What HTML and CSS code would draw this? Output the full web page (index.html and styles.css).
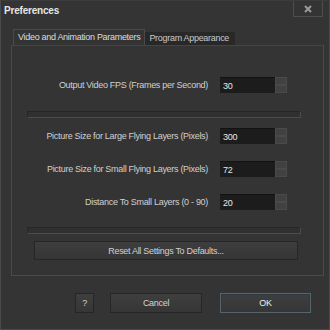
FILE: index.html
```html
<!DOCTYPE html>
<html>
<head>
<meta charset="utf-8">
<link rel="stylesheet" href="styles.css">
</head>
<body>
<div class="window">
  <div class="titlebar">
    <span class="title">Preferences</span>
    <span class="close">
      <svg width="10" height="10" viewBox="0 0 10 10"><path d="M2 2 L8 8 M8 2 L2 8" stroke="#9a9a9a" stroke-width="2"/></svg>
    </span>
  </div>
  <div class="tabs">
    <div class="tab active">Video and Animation Parameters</div>
    <div class="tab">Program Appearance</div>
  </div>
  <div class="panel">
    <div class="row first">
      <span class="label">Output Video FPS (Frames per Second)</span>
      <span class="spin"><span class="input">30</span><span class="arrows"><i></i><i></i></span></span>
    </div>
    <div class="sep"></div>
    <div class="row">
      <span class="label">Picture Size for Large Flying Layers (Pixels)</span>
      <span class="spin"><span class="input">300</span><span class="arrows"><i></i><i></i></span></span>
    </div>
    <div class="row">
      <span class="label">Picture Size for Small Flying Layers (Pixels)</span>
      <span class="spin"><span class="input">72</span><span class="arrows"><i></i><i></i></span></span>
    </div>
    <div class="row">
      <span class="label">Distance To Small Layers (0 - 90)</span>
      <span class="spin"><span class="input">20</span><span class="arrows"><i></i><i></i></span></span>
    </div>
    <div class="sep sep2"></div>
    <div class="reset">Reset All Settings To Defaults...</div>
  </div>
  <div class="footer">
    <div class="btn help">?</div>
    <div class="btn cancel">Cancel</div>
    <div class="btn ok">OK</div>
  </div>
</div>
</body>
</html>
```
FILE: styles.css
```css
html, body {
  margin: 0;
  padding: 0;
  background: #333333;
}
.window {
  width: 330px;
  height: 330px;
  box-sizing: border-box;
  background: #343434;
  border: 1px solid #4a4a4a;
  border-top-color: #3c3c3c;
  font-family: "Liberation Sans", Arial, sans-serif;
  font-size: 9px;
  letter-spacing: -0.3px;
  color: #d0d0d0;
  white-space: nowrap;
  display: flex;
  flex-direction: column;
}
.titlebar {
  height: 20px;
  display: flex;
  align-items: flex-start;
  justify-content: space-between;
}
.title {
  font-weight: bold;
  font-size: 10px;
  letter-spacing: -0.2px;
  color: #e6e6e6;
  margin: 4px 0 0 3px;
}
.close {
  width: 28px;
  height: 15px;
  border: 1px solid #4e4e4e;
  border-top: none;
  margin-right: 6px;
  display: flex;
  align-items: center;
  justify-content: center;
}
.tabs {
  display: flex;
  align-items: flex-end;
  margin: 8px 0 0 12px;
  height: 16px;
}
.tab {
  height: 13px;
  padding: 0 6px 0 4px;
  background: #282828;
  color: #c8c8c8;
  line-height: 13px;
}
.tab.active {
  height: 16px;
  line-height: 15px;
  padding: 0 4px 0 4px;
  background: #343434;
  border: 1px solid #4a4a4a;
  border-bottom: none;
  box-sizing: border-box;
  color: #dcdcdc;
}
.panel {
  margin: 0 5px 0 10px;
  height: 231px;
  box-sizing: border-box;
  border: 1px solid #4a4a4a;
  border-top-color: #454545;
  padding-top: 31px;
}
.row {
  display: flex;
  align-items: center;
  justify-content: flex-end;
  height: 16px;
  padding-right: 36px;
  margin-bottom: 17px;
}
.label {
  margin-right: 12px;
}
.spin {
  display: flex;
  height: 16px;
}
.input {
  width: 55px;
  height: 16px;
  box-sizing: border-box;
  background: #1c1c1c;
  color: #e8e8e8;
  padding-left: 3px;
  line-height: 16px;
  border-top: 1px solid #121212;
}
.arrows {
  width: 12px;
  display: flex;
  flex-direction: column;
  background: #3a3a3a;
}
.arrows i {
  flex: 1;
  border: 1px solid #4a4a4a;
  background: #414141;
}
.row.first {
  margin-bottom: 18px;
}
.sep {
  height: 5px;
  margin: 0 22px 10px 15px;
  border: 1px solid #4c4c4c;
  border-top-color: #262626;
  border-left-color: #262626;
  background: #303030;
}
.sep2 {
  margin-top: 0;
  margin-bottom: 7px;
}
.reset {
  margin: 0 25px 0 22px;
  height: 19px;
  box-sizing: border-box;
  border: 1px solid #262626;
  background: linear-gradient(#3e3e3e, #353535);
  text-align: center;
  line-height: 18px;
}
.footer {
  display: flex;
  margin-top: 17px;
  padding-left: 74px;
}
.btn {
  height: 20px;
  box-sizing: border-box;
  border: 1px solid #262626;
  background: linear-gradient(#3f3f3f, #363636);
  text-align: center;
  line-height: 18px;
  color: #d4d4d4;
}
.help {
  width: 19px;
  margin-right: 16px;
}
.cancel {
  width: 92px;
  margin-right: 18px;
}
.ok {
  width: 91px;
  border-color: #56656c;
  box-shadow: inset 0 0 0 1px #2c3a42;
  color: #f0f0f0;
}
```
